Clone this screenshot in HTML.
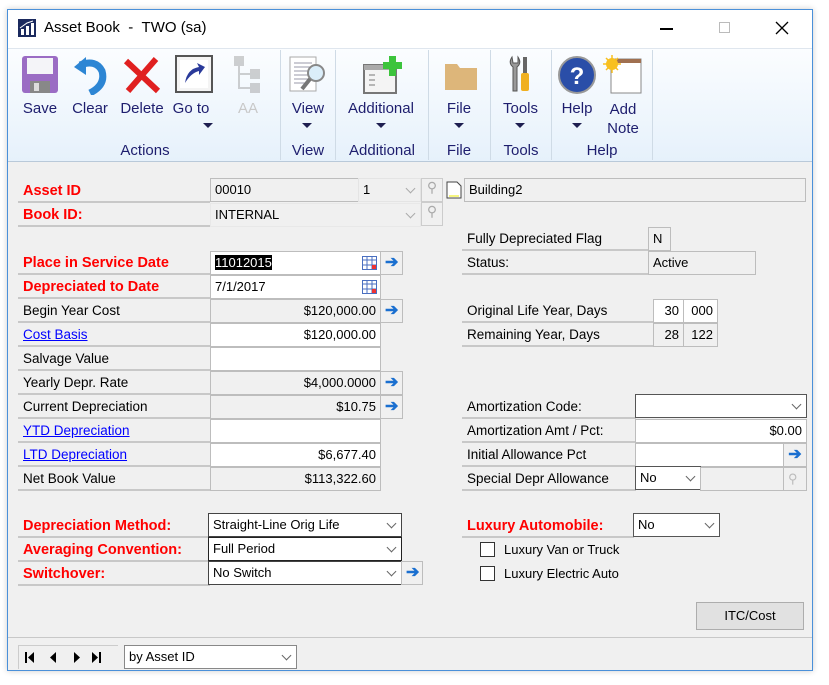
<!DOCTYPE html>
<html><head><meta charset="utf-8"><style>
*{box-sizing:border-box;margin:0;padding:0}
body{width:829px;height:685px;background:#fff;font-family:"Liberation Sans",Arial,sans-serif;font-size:13px;color:#000;position:relative;overflow:hidden}
.a{position:absolute}
.win{left:7px;top:9px;width:806px;height:662px;border:1px solid #4a90d9;background:#f0f0f0;box-shadow:0 0 6px rgba(0,0,0,.2)}
.title{left:8px;top:10px;width:804px;height:38px;background:#fff}
.ribbon{left:8px;top:48px;width:804px;height:114px;background:linear-gradient(#fbfdff,#e6f1fb);border-bottom:1px solid #b9c9d9;border-top:1px solid #dfe6ee}
.sep{top:50px;width:1px;height:110px;background:#cfdbe6}
.rl{color:#1e1e6e;font-size:15px;text-align:center}
.dn{width:0;height:0;border-left:5px solid transparent;border-right:5px solid transparent;border-top:5px solid #1e1e50}
.lab{height:24px;line-height:24px;padding-left:5px;border-bottom:2px solid #c8c8c8;font-size:13.5px}
.red{color:#f00;font-weight:bold;font-size:14.5px}
.lnk{color:#00f;text-decoration:underline}
.f{height:24px;line-height:22px;border:1px solid #bdbdbd;padding:0 4px;background:#f0f0f0}
.w{background:#fff}
.r{text-align:right}
.chev{position:absolute;right:6px;top:6px;width:7px;height:7px;border-right:1.3px solid #666;border-bottom:1.3px solid #666;transform:rotate(45deg)}
.arr{color:#1a6fd0;font-weight:bold;font-size:16px;text-align:center;line-height:22px}
.cb{width:15px;height:15px;border:1px solid #333;background:#fff}
</style></head><body>
<div class="a win"></div>
<div class="a title"></div>
<svg class="a" style="left:18px;top:19px" width="18" height="18"><rect width="18" height="18" fill="#1b2a5e"/><rect x="3" y="10" width="3" height="6" fill="#fff"/><rect x="8" y="7" width="3" height="9" fill="#fff"/><rect x="13" y="4" width="3" height="12" fill="#fff"/><path d="M2 9 L9 4 L15 2" stroke="#fff" fill="none"/></svg>
<div class="a" style="left:44px;top:19px;font-size:15px">Asset Book &nbsp;- &nbsp;TWO (sa)</div>
<div class="a" style="left:660px;top:28px;width:13px;height:1.5px;background:#000"></div>
<div class="a" style="left:719px;top:22px;width:11px;height:11px;border:1px solid #bbb"></div>
<svg class="a" style="left:775px;top:21px" width="14" height="14"><path d="M1 1L13 13M13 1L1 13" stroke="#000" stroke-width="1.3"/></svg>

<div class="a ribbon"></div>
<div class="a sep" style="left:280px"></div><div class="a sep" style="left:335px"></div><div class="a sep" style="left:428px"></div><div class="a sep" style="left:490px"></div><div class="a sep" style="left:551px"></div><div class="a sep" style="left:652px"></div>
<svg class="a" style="left:21px;top:55px" width="38" height="40"><rect x="1" y="1" width="36" height="37" rx="3" fill="#9b6cc4"/><rect x="6" y="3" width="26" height="16" fill="#f4f4f8"/><rect x="9" y="26" width="20" height="12" fill="#888"/><rect x="13" y="28" width="5" height="8" fill="#ddd"/></svg>
<svg class="a" style="left:72px;top:55px" width="36" height="40"><path d="M8 10 Q24 4 30 16 Q34 30 18 38" stroke="#2d86d4" stroke-width="7" fill="none"/><path d="M2 12 L14 2 L14 20Z" fill="#2d86d4"/></svg>
<svg class="a" style="left:122px;top:55px" width="40" height="40"><path d="M4 6 L36 36 M34 4 L6 36" stroke="#e02020" stroke-width="6"/></svg>
<svg class="a" style="left:175px;top:55px" width="38" height="40"><rect x="1" y="1" width="36" height="36" fill="#f4f4f4" stroke="#555" stroke-width="2"/><rect x="5" y="5" width="28" height="28" fill="#fff"/><path d="M10 28 Q12 14 24 12 L22 8 L30 12 L24 20 L24 16 Q16 18 10 28Z" fill="#2a3a9a"/></svg>
<svg class="a" style="left:232px;top:55px" width="32" height="40" opacity=".45"><rect x="2" y="1" width="10" height="10" fill="#999"/><rect x="18" y="14" width="10" height="10" fill="#999"/><rect x="18" y="28" width="10" height="10" fill="#999"/><path d="M7 11V33H18M7 19H18" stroke="#999" stroke-width="2" fill="none"/></svg>
<svg class="a" style="left:288px;top:55px" width="40" height="40"><rect x="2" y="2" width="26" height="34" fill="#fff" stroke="#aaa"/><path d="M6 8h18M6 12h18M6 16h18M6 20h14M6 24h14M6 28h14" stroke="#99a"/><circle cx="28" cy="18" r="8" fill="#dbeefa" stroke="#888" stroke-width="2"/><path d="M22 24 L14 34" stroke="#777" stroke-width="4"/></svg>
<svg class="a" style="left:362px;top:55px" width="42" height="40"><rect x="2" y="10" width="32" height="28" fill="#f4f4f4" stroke="#777" stroke-width="2"/><rect x="2" y="10" width="32" height="5" fill="#aaa"/><path d="M7 20h6M7 25h6M7 30h6" stroke="#777"/><rect x="27" y="1" width="7" height="20" fill="#3cc43c"/><rect x="21" y="7" width="19" height="7" fill="#3cc43c"/></svg>
<svg class="a" style="left:443px;top:58px" width="36" height="34"><path d="M2 6h12l3 4h17v22H2z" fill="#ddb67a"/></svg>
<svg class="a" style="left:506px;top:55px" width="28" height="40"><path d="M6 2 Q2 8 7 12 V36 H11 V12 Q16 8 12 2 V8 H7z" fill="#999" stroke="#555"/><rect x="17" y="2" width="4" height="16" fill="#666"/><rect x="15" y="18" width="8" height="18" rx="2" fill="#f0b020"/></svg>
<svg class="a" style="left:557px;top:55px" width="40" height="40"><circle cx="20" cy="20" r="18" fill="#2a4ea8" stroke="#999" stroke-width="2"/><text x="20" y="29" font-family="Liberation Sans" font-size="24" font-weight="bold" fill="#fff" text-anchor="middle">?</text></svg>
<svg class="a" style="left:603px;top:55px" width="40" height="40"><rect x="8" y="4" width="30" height="34" fill="#fff" stroke="#888"/><rect x="8" y="4" width="30" height="4" fill="#a07050"/><circle cx="9" cy="9" r="6" fill="#f8c020"/><path d="M9 0v18M0 9h18M3 3l12 12M15 3L3 15" stroke="#f8c020" stroke-width="1.5"/></svg>
<div class="a rl" style="left:20px;top:100px;width:40px">Save</div>
<div class="a rl" style="left:70px;top:100px;width:40px">Clear</div>
<div class="a rl" style="left:118px;top:100px;width:48px">Delete</div>
<div class="a rl" style="left:170px;top:100px;width:42px">Go to</div>
<div class="a rl" style="left:230px;top:100px;width:36px;color:#c8c8c8">AA</div>
<div class="a rl" style="left:288px;top:100px;width:40px">View</div>
<div class="a rl" style="left:340px;top:100px;width:82px">Additional</div>
<div class="a rl" style="left:439px;top:100px;width:40px">File</div>
<div class="a rl" style="left:498px;top:100px;width:45px">Tools</div>
<div class="a rl" style="left:557px;top:100px;width:40px">Help</div>
<div class="a rl" style="left:600px;top:100px;width:46px;line-height:19px">Add<br>Note</div>
<div class="a dn" style="left:203px;top:123px"></div>
<div class="a dn" style="left:302px;top:123px"></div>
<div class="a dn" style="left:376px;top:123px"></div>
<div class="a dn" style="left:454px;top:123px"></div>
<div class="a dn" style="left:515px;top:123px"></div>
<div class="a dn" style="left:572px;top:123px"></div>
<div class="a rl" style="left:20px;top:142px;width:250px">Actions</div>
<div class="a rl" style="left:282px;top:142px;width:52px">View</div>
<div class="a rl" style="left:337px;top:142px;width:90px">Additional</div>
<div class="a rl" style="left:430px;top:142px;width:58px">File</div>
<div class="a rl" style="left:492px;top:142px;width:58px">Tools</div>
<div class="a rl" style="left:553px;top:142px;width:98px">Help</div>

<div class="a lab red" style="left:18px;top:179px;width:192px">Asset ID</div>
<div class="a f" style="left:210px;top:178px;width:149px">00010</div>
<div class="a f" style="left:358px;top:178px;width:63px;border-color:#e4e4e4">1<span class="chev" style="opacity:.5"></span></div>
<div class="a" style="left:421px;top:178px;width:22px;height:24px;border:1px solid #ccc;color:#aaa;font-size:14px;text-align:center">⚲</div>
<svg class="a" style="left:446px;top:181px" width="16" height="18"><path d="M1 1h10l4 4v12H1z" fill="#fff" stroke="#444"/><path d="M3 15h10" stroke="#ee0"/></svg>
<div class="a f" style="left:464px;top:178px;width:342px">Building2</div>
<div class="a lab red" style="left:18px;top:203px;width:192px">Book ID:</div>
<div class="a f" style="left:210px;top:203px;width:211px;border-color:#e8e8e8">INTERNAL<span class="chev" style="opacity:.5"></span></div>
<div class="a" style="left:421px;top:202px;width:22px;height:24px;border:1px solid #ccc;color:#aaa;font-size:14px;text-align:center">⚲</div>

<div class="a lab red" style="left:18px;top:251px;width:192px">Place in Service Date</div>
<div class="a f w" style="left:210px;top:251px;width:171px"><span style="background:#000;color:#fff">11012015</span></div>
<div class="a lab red" style="left:18px;top:275px;width:192px">Depreciated to Date</div>
<div class="a f w" style="left:210px;top:275px;width:171px">7/1/2017</div>
<svg class="a" style="left:362px;top:256px" width="15" height="14"><rect x=".5" y=".5" width="14" height="13" fill="#fff" stroke="#4a6fc0"/><path d="M1 4h13M5 1v13M10 1v13M1 9h13" stroke="#4a6fc0"/><rect x="10" y="9" width="4" height="4" fill="#e33"/></svg>
<svg class="a" style="left:362px;top:280px" width="15" height="14"><rect x=".5" y=".5" width="14" height="13" fill="#fff" stroke="#4a6fc0"/><path d="M1 4h13M5 1v13M10 1v13M1 9h13" stroke="#4a6fc0"/><rect x="10" y="9" width="4" height="4" fill="#e33"/></svg>
<div class="a f arr" style="left:380px;top:251px;width:23px">➔</div>

<div class="a lab" style="left:18px;top:299px;width:192px">Begin Year Cost</div>
<div class="a f r" style="left:210px;top:299px;width:171px">$120,000.00</div>
<div class="a f arr" style="left:380px;top:299px;width:23px">➔</div>
<div class="a lab lnk" style="left:18px;top:323px;width:192px">Cost Basis</div>
<div class="a f w r" style="left:210px;top:323px;width:171px">$120,000.00</div>
<div class="a lab" style="left:18px;top:347px;width:192px">Salvage Value</div>
<div class="a f w" style="left:210px;top:347px;width:171px"></div>
<div class="a lab" style="left:18px;top:371px;width:192px">Yearly Depr. Rate</div>
<div class="a f r" style="left:210px;top:371px;width:171px">$4,000.0000</div>
<div class="a f arr" style="left:380px;top:371px;width:23px">➔</div>
<div class="a lab" style="left:18px;top:395px;width:192px">Current Depreciation</div>
<div class="a f r" style="left:210px;top:395px;width:171px">$10.75</div>
<div class="a f arr" style="left:380px;top:395px;width:23px">➔</div>
<div class="a lab lnk" style="left:18px;top:419px;width:192px">YTD Depreciation</div>
<div class="a f w" style="left:210px;top:419px;width:171px"></div>
<div class="a lab lnk" style="left:18px;top:443px;width:192px">LTD Depreciation</div>
<div class="a f w r" style="left:210px;top:443px;width:171px">$6,677.40</div>
<div class="a lab" style="left:18px;top:467px;width:192px">Net Book Value</div>
<div class="a f r" style="left:210px;top:467px;width:171px">$113,322.60</div>

<div class="a lab" style="left:462px;top:227px;width:187px">Fully Depreciated Flag</div>
<div class="a f" style="left:648px;top:227px;width:23px">N</div>
<div class="a lab" style="left:462px;top:251px;width:187px">Status:</div>
<div class="a f" style="left:648px;top:251px;width:108px">Active</div>
<div class="a lab" style="left:462px;top:299px;width:192px">Original Life Year, Days</div>
<div class="a f w r" style="left:653px;top:299px;width:31px">30</div>
<div class="a f w r" style="left:683px;top:299px;width:35px">000</div>
<div class="a lab" style="left:462px;top:323px;width:192px">Remaining Year, Days</div>
<div class="a f r" style="left:653px;top:323px;width:31px">28</div>
<div class="a f r" style="left:683px;top:323px;width:35px">122</div>

<div class="a lab" style="left:462px;top:395px;width:174px">Amortization Code:</div>
<div class="a f w" style="left:635px;top:394px;width:172px;border-color:#555"><span class="chev"></span></div>
<div class="a lab" style="left:462px;top:419px;width:174px">Amortization Amt / Pct:</div>
<div class="a f w r" style="left:635px;top:419px;width:172px">$0.00</div>
<div class="a lab" style="left:462px;top:443px;width:174px">Initial Allowance Pct</div>
<div class="a f w" style="left:635px;top:443px;width:149px"></div>
<div class="a f arr" style="left:783px;top:443px;width:24px">➔</div>
<div class="a lab" style="left:462px;top:467px;width:174px">Special Depr Allowance</div>
<div class="a f w" style="left:635px;top:466px;width:66px;border-color:#555">No<span class="chev"></span></div>
<div class="a f" style="left:700px;top:467px;width:84px"></div>
<div class="a f" style="left:783px;top:467px;width:24px;color:#bbb">⚲</div>

<div class="a lab red" style="left:18px;top:514px;width:192px">Depreciation Method:</div>
<div class="a f w" style="left:208px;top:513px;width:194px;border-color:#444">Straight-Line Orig Life<span class="chev"></span></div>
<div class="a lab red" style="left:18px;top:538px;width:192px">Averaging Convention:</div>
<div class="a f w" style="left:208px;top:537px;width:194px;border-color:#222">Full Period<span class="chev"></span></div>
<div class="a lab red" style="left:18px;top:562px;width:192px">Switchover:</div>
<div class="a f w" style="left:208px;top:561px;width:194px;border-color:#444">No Switch<span class="chev"></span></div>
<div class="a f arr" style="left:401px;top:561px;width:22px">➔</div>
<div class="a lab red" style="left:462px;top:514px;width:172px">Luxury Automobile:</div>
<div class="a f w" style="left:633px;top:513px;width:87px;border-color:#555">No<span class="chev"></span></div>
<div class="a cb" style="left:480px;top:542px"></div>
<div class="a" style="left:504px;top:542px">Luxury Van or Truck</div>
<div class="a cb" style="left:480px;top:566px"></div>
<div class="a" style="left:504px;top:566px">Luxury Electric Auto</div>
<div class="a" style="left:696px;top:602px;width:108px;height:28px;border:1px solid #adadad;background:#e1e1e1;text-align:center;line-height:26px">ITC/Cost</div>

<div class="a" style="left:8px;top:637px;width:804px;height:1px;background:#c8c8c8"></div>
<div class="a" style="left:18px;top:645px;width:100px;height:24px;border-top:1px solid #ccc;border-left:1px solid #ccc"></div>
<svg class="a" style="left:24px;top:651px" width="84" height="13"><path d="M2 1v11" stroke="#000" stroke-width="2"/><path d="M10 1L4 6.5 10 12z"/><path d="M32 1L26 6.5 32 12z"/><path d="M50 1L56 6.5 50 12z"/><path d="M68 1L74 6.5 68 12z"/><path d="M76 1v11" stroke="#000" stroke-width="2"/></svg>
<div class="a f w" style="left:124px;top:645px;width:173px;border-color:#888">by Asset ID<span class="chev"></span></div>
</body></html>
